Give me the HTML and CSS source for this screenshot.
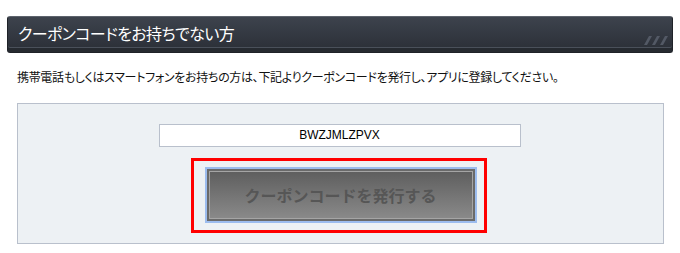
FILE: index.html
```html
<!DOCTYPE html>
<html lang="ja">
<head>
<meta charset="UTF-8">
<meta name="viewport" content="width=device-width, initial-scale=1.0">
<title>クーポンコード</title>
<link rel="stylesheet" href="styles.css">
</head>
<body>

<div class="section">
    <div class="section-title">
        クーポンコードをお持ちでない方
        <svg class="title-stripes" width="24" height="9" viewBox="0 0 24 9">
            <polygon points="0,9 5,0 8,0 3,9" fill="#535965"/>
            <polygon points="8,9 13,0 16,0 11,9" fill="#535965"/>
            <polygon points="16,9 21,0 24,0 19,9" fill="#535965"/>
        </svg>
    </div>

    <p class="lead">携帯電話もしくはスマートフォンをお持ちの方は、下記よりクーポンコードを発行し、アプリに登録してください。</p>

    <div class="coupon-panel">
        <div class="coupon-code">BWZJMLZPVX</div>
        <div class="highlight-box">
            <button class="issue-btn">クーポンコードを発行する</button>
        </div>
    </div>
</div>

</body>
</html>
```

FILE: styles.css
```css
/* Base */
body {
    margin: 0;
    padding: 16px 7px;
    background: #ffffff;
    color: #222222;
    font-family: "Noto Sans CJK JP", "Liberation Sans", sans-serif;
}

/* Section heading bar */
.section-title {
    position: relative;
    box-sizing: border-box;
    height: 37px;
    padding: 0 0 4px 10px;
    display: flex;
    align-items: center;
    color: #ffffff;
    font-size: 16px;
    letter-spacing: -0.6px;
    font-feature-settings: "palt";
    background: linear-gradient(#3d434d, #2a2e36);
    border: 1px solid #1f2228;
    border-top-color: #5d636d;
    border-radius: 3px;
    box-shadow: inset 0 -4px 0 #262a30, inset 0 -5px 0 #4a505a;
}

.title-stripes {
    position: absolute;
    right: 4px;
    bottom: 7px;
}

.lead {
    margin: 16px 0 18px;
    padding-left: 10px;
    font-size: 12px;
    line-height: 16px;
    font-feature-settings: "palt";
    letter-spacing: -0.32px;
    color: #111111;
}

/* Coupon panel */
.coupon-panel {
    margin: 0 9px 0 10px;
    padding: 20px 0 10px;
    background: #edf1f4;
    border: 1px solid #b9c0cc;
    display: flex;
    flex-direction: column;
    align-items: center;
}

.coupon-code {
    box-sizing: border-box;
    width: 362px;
    height: 23px;
    margin-right: 2px;
    background: #ffffff;
    border: 1px solid #b9c0cc;
    font-family: "Liberation Sans", Arial, sans-serif;
    font-size: 12px;
    line-height: 21px;
    text-align: center;
    color: #000000;
}

.highlight-box {
    margin: 11px 4px 0 0;
    padding: 6px 7px 7px 11px;
    border: 3px solid #ff0000;
}

.issue-btn {
    display: block;
    box-sizing: border-box;
    width: 272px;
    height: 56px;
    padding: 0;
    border: 2px solid #9cbcee;
    background: linear-gradient(#5c5c5c, #8c8c8c);
    box-shadow: inset 0 0 0 2px #6a6a6a, inset 0 0 0 3px #a5a5a5;
    color: #565656;
    font-family: "Noto Sans CJK JP", sans-serif;
    font-size: 16px;
    font-weight: bold;
    cursor: pointer;
}
```
